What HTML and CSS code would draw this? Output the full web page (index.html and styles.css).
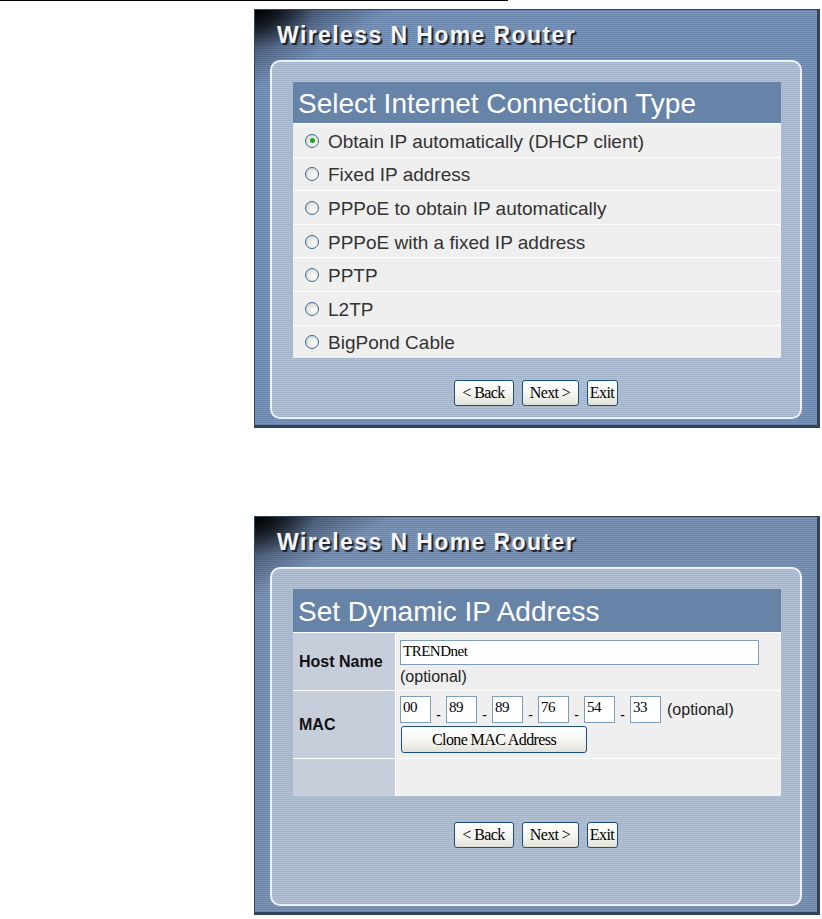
FILE: index.html
```html
<!DOCTYPE html>
<html lang="en">

<head>
    <meta charset="UTF-8">
    <meta name="viewport" content="width=device-width, initial-scale=1.0">
    <title>Wireless N Home Router</title>
    <link rel="stylesheet" href="styles.css">
</head>

<body>
    <div class="top-rule"></div>

    <!-- Select connection type -->
    <div class="router router-first">
        <div class="router-title">Wireless N Home Router</div>
        <div class="frame frame-first">
            <div class="frame-head">Select Internet Connection Type</div>
            <div class="options">
                <label class="option"><span class="radio checked"></span>Obtain IP automatically (DHCP client)</label>
                <label class="option"><span class="radio"></span>Fixed IP address</label>
                <label class="option"><span class="radio"></span>PPPoE to obtain IP automatically</label>
                <label class="option"><span class="radio"></span>PPPoE with a fixed IP address</label>
                <label class="option"><span class="radio"></span>PPTP</label>
                <label class="option"><span class="radio"></span>L2TP</label>
                <label class="option"><span class="radio"></span>BigPond Cable</label>
            </div>
            <div class="buttons">
                <button class="btn btn-back">&lt; Back</button>
                <button class="btn btn-next">Next &gt;</button>
                <button class="btn btn-exit">Exit</button>
            </div>
        </div>
    </div>

    <!-- Dynamic IP -->
    <div class="router router-second">
        <div class="router-title">Wireless N Home Router</div>
        <div class="frame frame-second">
            <div class="frame-head frame-head-tall">Set Dynamic IP Address</div>
            <div class="settings">
                <div class="cell-label row-host">Host Name</div>
                <div class="cell-value row-host">
                    <div class="text-box host-box">TRENDnet</div>
                    <div class="note">(optional)</div>
                </div>

                <div class="cell-label row-mac">MAC</div>
                <div class="cell-value row-mac">
                    <div class="mac-line">
                        <span class="text-box mac-box">00</span><span class="dash">-</span>
                        <span class="text-box mac-box">89</span><span class="dash">-</span>
                        <span class="text-box mac-box">89</span><span class="dash">-</span>
                        <span class="text-box mac-box">76</span><span class="dash">-</span>
                        <span class="text-box mac-box">54</span><span class="dash">-</span>
                        <span class="text-box mac-box">33</span>
                        <span class="note mac-note">(optional)</span>
                    </div>
                    <button class="btn btn-clone">Clone MAC Address</button>
                </div>

                <div class="cell-label row-empty"></div>
                <div class="cell-value row-empty"></div>
            </div>
            <div class="buttons buttons-second">
                <button class="btn btn-back">&lt; Back</button>
                <button class="btn btn-next">Next &gt;</button>
                <button class="btn btn-exit">Exit</button>
            </div>
        </div>
    </div>
</body>

</html>
```

FILE: styles.css
```css
body {
    margin: 0;
    padding: 0;
    background-color: #ffffff;
    font-family: "Liberation Sans", Arial, sans-serif;
}

.top-rule {
    width: 508px;
    height: 1px;
    background-color: #000000;
}

.router {
    box-sizing: border-box;
    width: 566px;
    margin-left: 254px;
    border-style: solid;
    border-color: #34425a;
    border-width: 1px 3px 3px 1px;
    background:
        radial-gradient(ellipse 60px 40px at 0 0, rgba(0, 0, 0, 0.95), rgba(0, 0, 0, 0) 100%),
        linear-gradient(150deg, rgba(8, 12, 22, 0.85) 0, rgba(20, 28, 45, 0.45) 30px, rgba(0, 0, 0, 0) 70px),
        repeating-linear-gradient(#6a85ab 0, #6a85ab 1px, #7e96b8 1px, #7e96b8 2px);
    padding-bottom: 6px;
}

.router-first {
    margin-top: 8px;
}

.router-second {
    margin-top: 88px;
}

.router-title {
    height: 50px;
    padding-left: 22px;
    box-sizing: border-box;
    padding-top: 12px;
    font-size: 23px;
    font-weight: bold;
    letter-spacing: 1.4px;
    color: #f6f6f6;
    text-shadow: 2px 2px 1px #1b2333, 1px 1px 0 #39455a;
}

.frame {
    margin: 0 15px;
    border: 2px solid #edf1f6;
    border-radius: 10px;
    padding: 20px 19px 11px 21px;
    background: repeating-linear-gradient(#a2b3ca 0, #a2b3ca 1px, #b3c1d4 1px, #b3c1d4 2px);
}

.frame-second {
    padding-bottom: 56px;
}

.frame-head {
    height: 41px;
    padding-left: 5px;
    background-color: #6783a8;
    color: #ffffff;
    font-size: 28px;
    line-height: 43px;
}

.frame-head-tall {
    height: 43px;
    line-height: 45px;
}

.options {
    display: grid;
    grid-auto-rows: 32.6px;
    gap: 1px;
    padding-top: 1px;
    background-color: #ffffff;
}

.option {
    display: flex;
    align-items: center;
    gap: 9px;
    padding: 3px 0 0 12px;
    background-color: #efefef;
    color: #333333;
    font-size: 19px;
}

.radio {
    position: relative;
    box-sizing: border-box;
    width: 14px;
    height: 14px;
    margin-top: -2px;
    border: 1px solid #3a6a98;
    border-radius: 50%;
    background: radial-gradient(circle at 65% 65%, #ffffff, #e4e4de 60%, #c9c9c2);
}

.radio.checked::after {
    content: "";
    position: absolute;
    left: 3.5px;
    top: 3.5px;
    width: 5px;
    height: 5px;
    border-radius: 50%;
    background-color: #21a121;
}

.buttons {
    display: flex;
    justify-content: center;
    gap: 8px;
    margin-top: 22px;
    padding-right: 3px;
}

.buttons-second {
    margin-top: 26px;
}

.btn {
    box-sizing: border-box;
    height: 26px;
    padding: 0;
    border: 1px solid #1d4f7e;
    border-radius: 3px;
    background: linear-gradient(#ffffff, #f3f3ee 60%, #e2e1d8);
    color: #000000;
    font-family: "Liberation Serif", "Times New Roman", serif;
    font-size: 16px;
    letter-spacing: -0.6px;
}

.btn-back {
    width: 60px;
}

.btn-next {
    width: 57px;
}

.btn-exit {
    width: 31px;
}

.settings {
    display: grid;
    grid-template-columns: 102px 1fr;
    grid-template-rows: 57px 67px 37px;
    gap: 1px;
    padding-top: 1px;
    background-color: #ffffff;
}

.cell-label {
    display: flex;
    align-items: center;
    padding-left: 6px;
    background-color: #c6cedb;
    color: #111111;
    font-size: 16px;
    font-weight: bold;
}

.cell-value {
    padding-left: 4px;
    background-color: #efefef;
}

.cell-value.row-host {
    padding-top: 7px;
}

.cell-value.row-mac {
    padding-top: 5px;
}

.text-box {
    box-sizing: border-box;
    display: inline-block;
    border: 1px solid #7f9db9;
    background-color: #ffffff;
    font-family: "Liberation Serif", "Times New Roman", serif;
    font-size: 15px;
    letter-spacing: -0.5px;
    padding-left: 2px;
    color: #000000;
}

.host-box {
    width: 359px;
    height: 25px;
    line-height: 20px;
}

.note {
    margin-top: 3px;
    font-size: 16px;
    color: #222222;
}

.mac-line {
    display: flex;
    align-items: flex-end;
    height: 27px;
}

.mac-box {
    width: 31px;
    height: 27px;
    line-height: 20px;
}

.dash {
    width: 15px;
    text-align: center;
    font-size: 14px;
    line-height: 16px;
}

.mac-note {
    margin: 0 0 4px 6px;
}

.btn-clone {
    display: block;
    width: 186px;
    height: 27px;
    margin-top: 3px;
    margin-left: 1px;
}
```
